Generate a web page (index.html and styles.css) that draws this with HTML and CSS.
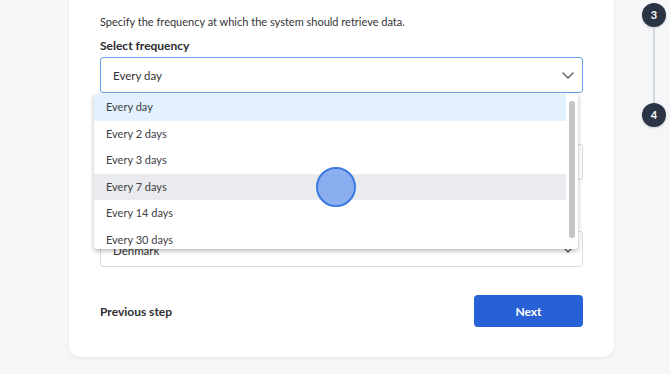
FILE: index.html
```html
<!DOCTYPE html>
<html lang="en">

<head>
  <meta charset="UTF-8">
  <meta name="viewport" content="width=device-width, initial-scale=1.0">
  <link rel="stylesheet" href="styles.css">
</head>

<body>
  <div class="wizard">
    <div class="card">
      <p class="desc">Specify the frequency at which the system should retrieve data.</p>

      <div class="field">
        <label class="label">Select frequency</label>
        <div class="select focus">
          <span>Every day</span>
          <svg class="chevron" width="12" height="7" viewBox="0 0 12 7"><path d="M1 1l5 5 5-5" fill="none" stroke="#555" stroke-width="1.3" stroke-linecap="round" stroke-linejoin="round"/></svg>
        </div>

        <div class="dropdown">
          <div class="option selected">Every day</div>
          <div class="option">Every 2 days</div>
          <div class="option">Every 3 days</div>
          <div class="option hover">Every 7 days</div>
          <div class="option">Every 14 days</div>
          <div class="option">Every 30 days</div>
          <div class="scrollbar"></div>
          <div class="cursor"></div>
        </div>
      </div>

      <!-- labels of the next two fields are hidden under the open list -->
      <div class="field">
        <div class="label"></div>
        <div class="input"></div>
      </div>

      <div class="field">
        <div class="label"></div>
        <div class="select">
          <span class="covered">Denmark</span>
          <svg class="chevron" width="12" height="7" viewBox="0 0 12 7"><path d="M1 1l5 5 5-5" fill="none" stroke="#555" stroke-width="1.3" stroke-linecap="round" stroke-linejoin="round"/></svg>
        </div>
      </div>

      <div class="footer">
        <a class="prev">Previous step</a>
        <button class="btn-next" type="button">Next</button>
      </div>
    </div>

    <div class="steps">
      <div class="step">3</div>
      <div class="step-line"></div>
      <div class="step">4</div>
    </div>
  </div>
</body>

</html>
```

FILE: styles.css
```css
html,
body {
  margin: 0;
  padding: 0;
}

body {
  background-color: #f5f6f8;
  font-family: Lato, "Open Sans", sans-serif;
  color: #2f3033;
  height: 374px;
  overflow: hidden;
}

.wizard {
  display: flex;
  flex-direction: row;
  align-items: flex-start;
  padding-left: 69px;
}

.card {
  width: 545px;
  box-sizing: border-box;
  padding: 13px 31px 30px 31px;
  background-color: #fff;
  border-radius: 0 0 11px 11px;
  box-shadow: 0 1px 3px rgba(0, 0, 0, 0.08);
}

.desc {
  margin: 0;
  font-size: 11px;
  line-height: 18px;
  color: #333438;
}

.field {
  position: relative;
  margin-top: 32px;
}

.desc+.field {
  margin-top: 7px;
}

.label {
  display: block;
  height: 16px;
  margin-bottom: 3px;
  font-size: 12px;
  line-height: 16px;
  font-weight: bold;
  color: #2b2c30;
}

.select,
.input {
  display: flex;
  align-items: center;
  justify-content: space-between;
  height: 36px;
  box-sizing: border-box;
  padding: 0 8px 0 12px;
  border: 1px solid #d8dbe0;
  border-radius: 3px;
  font-size: 11.5px;
  color: #333;
}

.select .covered {
  padding-top: 2px;
}

.select.focus {
  border: 1.5px solid #67a6e6;
}

.dropdown {
  position: absolute;
  top: 56px;
  left: -6px;
  width: 484px;
  height: 155px;
  overflow: hidden;
  background-color: #fff;
  box-shadow: 0 2px 5px rgba(0, 0, 0, 0.28);
  border-radius: 0 0 2px 2px;
  z-index: 2;
}

.option {
  width: 472px;
  height: 26.5px;
  box-sizing: border-box;
  padding-left: 12px;
  font-size: 11px;
  line-height: 26.5px;
  color: #404145;
}

.option.selected {
  background-color: #e2f1fd;
}

.option.hover {
  background-color: #e9ebee;
}

.scrollbar {
  position: absolute;
  top: 7px;
  right: 3px;
  width: 6px;
  height: 137px;
  border-radius: 3px;
  background-color: #c3c3c3;
}

.cursor {
  position: absolute;
  left: 222px;
  top: 73px;
  width: 36px;
  height: 36px;
  border-radius: 50%;
  border: 2px solid #3b78e2;
  background-color: rgba(120, 162, 238, 0.85);
}

.footer {
  display: flex;
  align-items: center;
  justify-content: space-between;
  margin-top: 28px;
}

.prev {
  font-size: 12px;
  font-weight: bold;
  color: #2f3033;
}

.btn-next {
  width: 109px;
  height: 32px;
  border: none;
  border-radius: 4px;
  background-color: #2860d5;
  color: #fff;
  font-family: inherit;
  font-size: 12px;
  font-weight: bold;
}

.steps {
  display: flex;
  flex-direction: column;
  align-items: center;
  width: 24px;
  margin-left: 28px;
  padding-top: 3px;
}

.step {
  width: 24px;
  height: 24px;
  border-radius: 50%;
  background-color: #2a3445;
  color: #fff;
  font-size: 11px;
  font-weight: bold;
  line-height: 24px;
  text-align: center;
  box-shadow: 0 1px 2px rgba(0, 0, 0, 0.2);
}

.step-line {
  width: 2px;
  height: 76px;
  background-color: #d3d6db;
}
```
